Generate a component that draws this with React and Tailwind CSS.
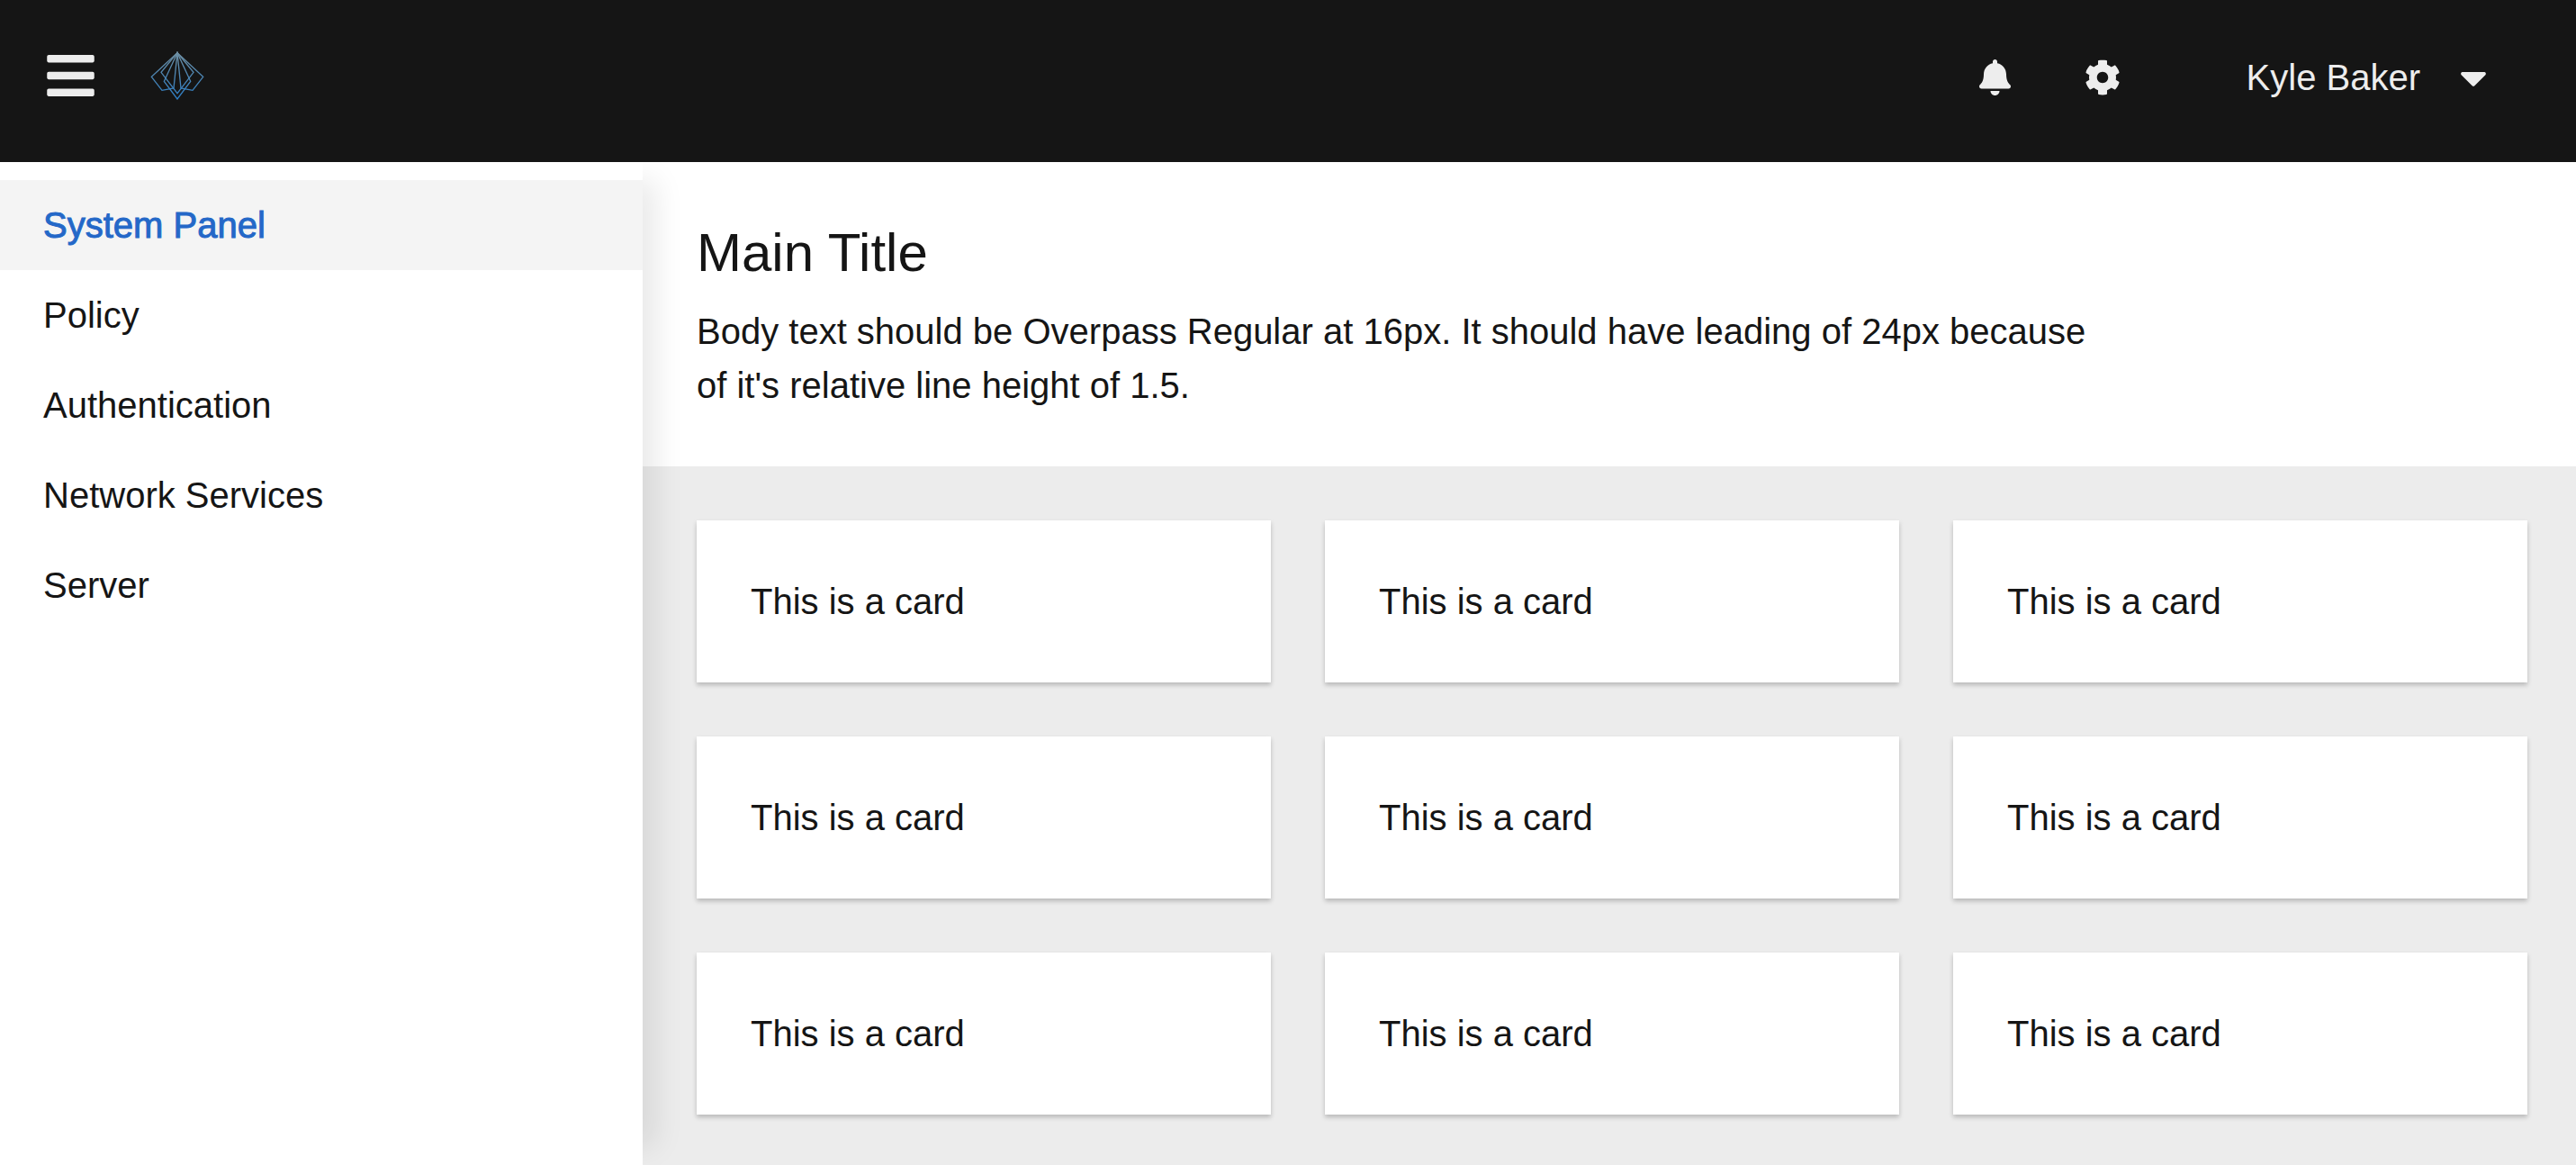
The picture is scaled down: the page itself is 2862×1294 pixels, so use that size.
import React from "react";
import { FaBars, FaBell, FaCaretDown, FaCog } from "react-icons/fa";

const navItems = ["System Panel", "Policy", "Authentication", "Network Services", "Server"];
const cards = Array.from({ length: 9 }, (_, i) => ({ id: i, text: "This is a card" }));

function Logo() {
  return (
    <svg className="h-[54px] w-[60px]" viewBox="52 52 180 162" fill="none" aria-hidden="true">
      <defs>
        <linearGradient id="logo-stroke" x1="0" y1="54" x2="0" y2="212" gradientUnits="userSpaceOnUse">
          <stop offset="0" stopColor="#6f8fa2" />
          <stop offset="1" stopColor="#2b7cc4" />
        </linearGradient>
      </defs>
      <g stroke="url(#logo-stroke)" strokeWidth="4">
        <path d="M142 57 L56 137 L91 182 L130 175 Z" />
        <path d="M142 57 L228 137 L193 182 L154 175 Z" />
        <path d="M142 57 L88 122 L142 192 L196 122 Z" />
        <path d="M142 57 L98 152 L142 211 L186 152 Z" />
      </g>
    </svg>
  );
}

function Header() {
  return (
    <header className="relative z-20 flex h-[180px] items-stretch justify-between bg-[#151515] text-[#ededed]">
      <div className="flex items-center gap-[62px] pb-3 pl-[52px]">
        <button type="button" aria-label="Toggle navigation">
          <FaBars className="h-[60px] w-[53px]" />
        </button>
        <a href="#" aria-label="Home">
          <Logo />
        </a>
      </div>
      <div className="flex items-center pr-[99px] pb-2">
        <button type="button" aria-label="Notifications">
          <FaBell className="h-10 w-[35px]" />
        </button>
        <button type="button" aria-label="Settings" className="ml-[82px]">
          <FaCog className="size-10" />
        </button>
        <button type="button" className="ml-[140px] flex items-center gap-11 leading-[60px]">
          Kyle Baker
          <FaCaretDown className="h-12 w-[30px]" />
        </button>
      </div>
    </header>
  );
}

function Sidebar() {
  return (
    <nav
      aria-label="Main"
      className="relative z-10 w-[714px] shrink-0 bg-white pt-5 shadow-[35px_0_30px_-20px_rgba(3,3,3,0.085)]"
    >
      <ul>
        {navItems.map((item, i) => (
          <li key={item}>
            <a
              href="#"
              aria-current={i === 0 ? "page" : undefined}
              className={
                i === 0
                  ? "block bg-[#f4f4f4] px-12 py-5 text-[#2468c8] [-webkit-text-stroke:1px_#2468c8]"
                  : "block px-12 py-5"
              }
            >
              {item}
            </a>
          </li>
        ))}
      </ul>
    </nav>
  );
}

export default function App() {
  return (
    <div className="flex min-h-screen flex-col bg-white font-['Liberation_Sans',Arial,sans-serif] text-[40px] leading-[60px] text-[#151515]">
      <Header />
      <div className="flex grow">
        <Sidebar />
        <main className="flex min-w-0 grow flex-col">
          <section className="bg-white p-[60px]">
            <h1 className="mb-4 text-[60px] leading-[82px]">Main Title</h1>
            <p className="max-w-[1570px]">
              Body text should be Overpass Regular at 16px. It should have leading of 24px because of it's
              relative line height of 1.5.
            </p>
          </section>
          <section className="grid grow grid-cols-3 content-start gap-[60px] bg-[#ececec] pt-[60px] pr-[54px] pb-14 pl-[60px]">
            {cards.map((card) => (
              <article key={card.id} className="bg-white p-[60px] shadow-[0_3px_5px_rgba(3,3,3,0.22)]">
                {card.text}
              </article>
            ))}
          </section>
        </main>
      </div>
    </div>
  );
}
